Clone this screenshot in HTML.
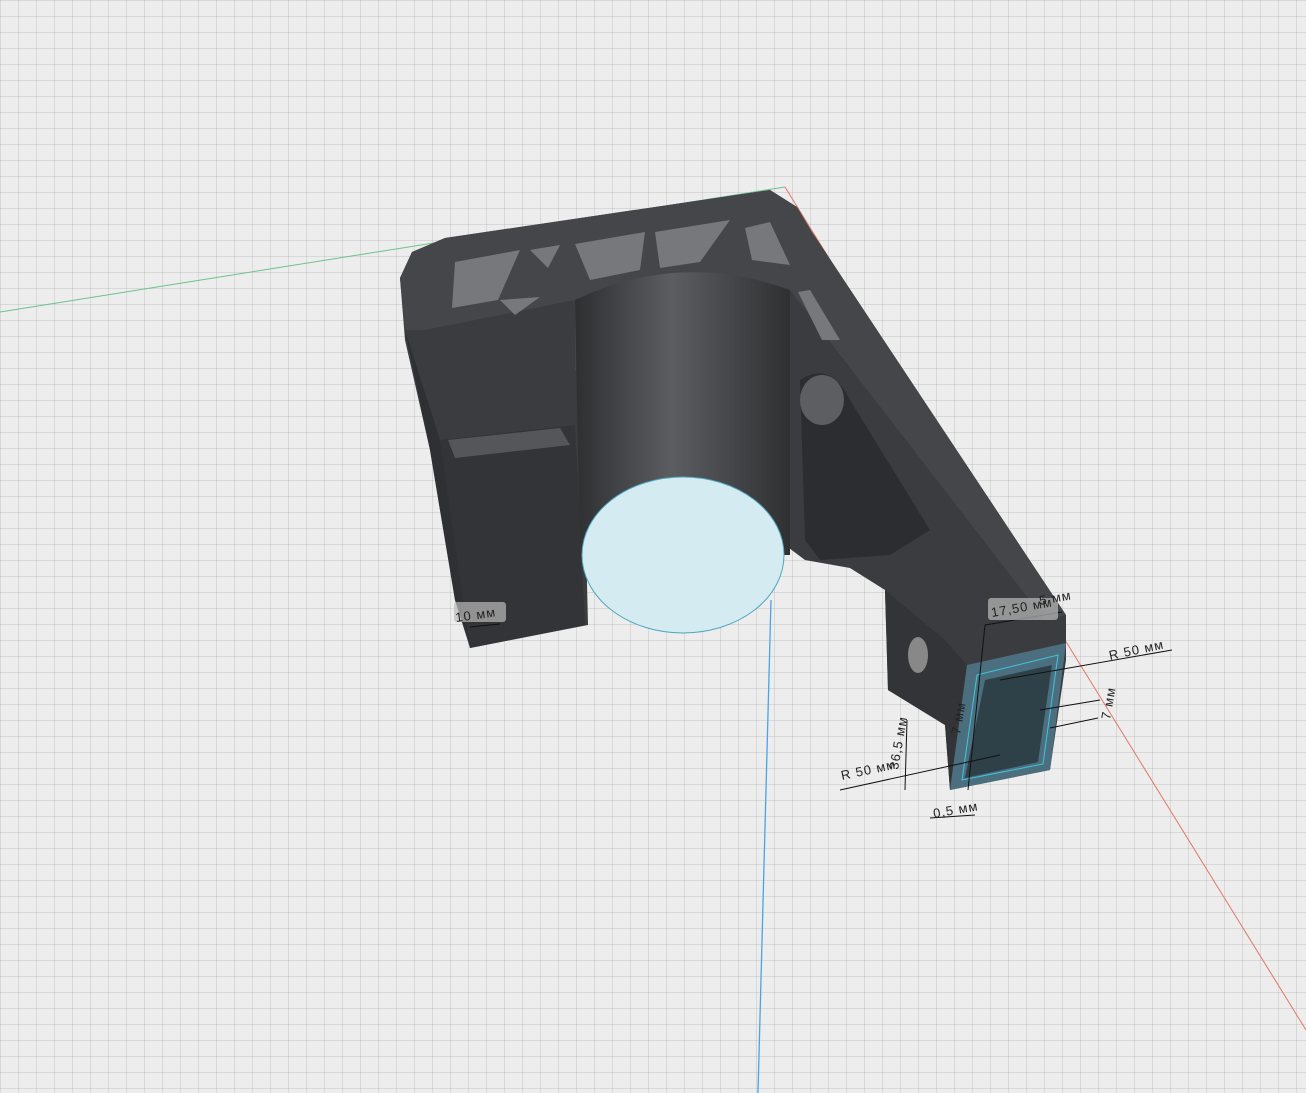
<!DOCTYPE html>
<html><head><meta charset="utf-8"><style>
html,body{margin:0;padding:0;width:1306px;height:1093px;overflow:hidden;background:#ededed;}
#g{position:absolute;left:0;top:0;width:1306px;height:1093px;
background-image:
linear-gradient(to bottom, rgba(160,160,160,.28) 1px, transparent 1px),
linear-gradient(to right, rgba(160,160,160,.28) 1px, transparent 1px);
background-size:18px 16px;}
svg{position:absolute;left:0;top:0}
text{font-family:"Liberation Sans",sans-serif;font-size:13px;fill:#222;letter-spacing:1px}
</style></head><body>
<div id="g"></div>
<svg width="1306" height="1093" viewBox="0 0 1306 1093">
<defs>
<linearGradient id="cyl" x1="0" x2="1" y1="0" y2="0">
<stop offset="0" stop-color="#2e2f31"/><stop offset="0.45" stop-color="#5c5d61"/><stop offset="1" stop-color="#2f3032"/>
</linearGradient>
</defs>
<line x1="0" y1="312" x2="785" y2="187" stroke="#6cc28a" stroke-width="1"/>
<line x1="785" y1="187" x2="1306" y2="1030" stroke="#e07a6a" stroke-width="1"/>
<line x1="771" y1="600" x2="758" y2="1093" stroke="#4aa3e8" stroke-width="1.3"/>
<!-- main body -->
<polygon fill="#3b3c3f" points="400,278 412,252 445,238 770,190 797,207 812,232 1066,615 1066,660 1050,770 950,790 945,725 888,690 885,590 850,568 805,560 785,545 780,490 585,500 588,625 470,648 455,600 430,450 405,340"/>
<!-- top face lighter -->
<polygon fill="#45464a" points="400,278 412,252 445,238 770,190 797,207 812,232 1066,615 1045,620 790,290 790,360 575,370 575,300 425,330 405,330"/>
<g fill="#77787c">
<polygon points="455,262 520,250 498,300 452,308"/>
<polygon points="530,250 560,245 548,268"/>
<polygon points="575,244 645,232 640,270 590,280"/>
<polygon points="655,232 730,220 700,262 660,268"/>
<polygon points="745,228 770,222 790,265 752,260"/>
<polygon points="500,300 540,297 515,315"/>
<polygon points="798,292 810,290 840,340 822,340"/>
</g>
<!-- cylinder -->
<path d="M575,300 Q680,250 790,290 L790,555 L580,555 Z" fill="url(#cyl)"/>
<!-- left arm front block -->
<polygon fill="#2f3033" points="405,330 440,440 470,645 455,600 430,450"/>
<polygon fill="#333437" points="440,440 575,425 585,625 470,648"/>
<polygon fill="#55565a" points="448,440 560,428 570,445 455,458"/>
<!-- right channel -->
<path d="M800,380 Q830,360 850,400 L930,530 L890,555 L820,560 L805,540 Z" fill="#2c2d30"/>
<ellipse cx="822" cy="400" rx="22" ry="25" fill="#5d5e62"/>
<polygon fill="#333437" points="885,590 945,640 967,665 950,790 945,725 888,690"/>
<ellipse cx="918" cy="655" rx="10" ry="18" fill="#888"/>
<!-- hole circle -->
<ellipse cx="683" cy="555" rx="101" ry="78" fill="#d3ebf1" stroke="#4fa6c0" stroke-width="1"/>
<!-- front face -->
<polygon fill="#4b6f7e" points="967,665 1066,643 1050,770 950,790"/>
<polygon fill="#2e4149" points="985,680 1052,665 1038,762 965,778"/>
<polygon fill="none" stroke="#3ec6e0" stroke-width="1" points="977,675 1058,655 1043,764 962,780"/>
<g stroke="#111" stroke-width="1" fill="none">
<line x1="840" y1="790" x2="1000" y2="755"/>
<line x1="1000" y1="680" x2="1172" y2="650"/>
<line x1="907" y1="720" x2="905" y2="790"/>
<line x1="985" y1="625" x2="1062" y2="612"/>
<line x1="985" y1="625" x2="968" y2="790"/>
<line x1="1040" y1="710" x2="1100" y2="700"/>
<line x1="1050" y1="728" x2="1098" y2="718"/>
<line x1="930" y1="818" x2="975" y2="815"/>
<line x1="470" y1="627" x2="500" y2="624"/>
</g>
<g>
<rect x="988" y="598" width="70" height="22" rx="3" fill="#bbb" opacity=".7"/>
<rect x="454" y="602" width="52" height="20" rx="3" fill="#bbb" opacity=".7"/>
<text x="456" y="622" transform="rotate(-8 456 622)">10 мм</text>
<text x="992" y="617" transform="rotate(-10 992 617)">17,50 мм</text>
<text x="1040" y="605" transform="rotate(-10 1040 605)">5 мм</text>
<text x="1110" y="660" transform="rotate(-12 1110 660)">R 50 мм</text>
<text x="842" y="780" transform="rotate(-12 842 780)">R 50 мм</text>
<text x="934" y="818" transform="rotate(-10 934 818)">0,5 мм</text>
<text x="1110" y="720" transform="rotate(-80 1110 720)">7 мм</text>
<text x="960" y="735" transform="rotate(-80 960 735)">7 мм</text>
<text x="898" y="770" transform="rotate(-80 898 770)">36,5 мм</text>
</g>
</svg>
</body></html>
